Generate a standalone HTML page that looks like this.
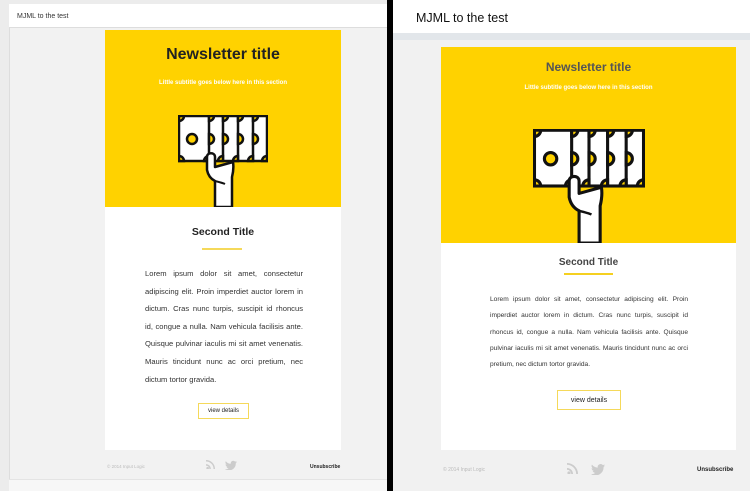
<!DOCTYPE html>
<html><head><style>
*{margin:0;padding:0;box-sizing:border-box}
body{width:750px;height:491px;overflow:hidden;background:#fff;font-family:"Liberation Sans",sans-serif;position:relative}
.a{position:absolute}
.txt{text-align:justify;color:#333}
.btn{display:flex;align-items:center;justify-content:center;color:#222}
</style></head><body>
<svg width="0" height="0" style="position:absolute"><defs>
<g id="ic">
<rect x="1" y="1" width="88" height="45" fill="#fff" stroke="#111" stroke-width="2.5"/>
<g stroke="#111" stroke-width="2.5" fill="#ffd200">
<line x1="31" y1="1" x2="31" y2="46"/><line x1="45" y1="1" x2="45" y2="46"/><line x1="60" y1="1" x2="60" y2="46"/><line x1="75" y1="1" x2="75" y2="46"/>
<circle cx="14" cy="24" r="5"/>
<path d="M31 19 a5 5 0 0 1 0 10z"/><path d="M45 19 a5 5 0 0 1 0 10z"/><path d="M60 19 a5 5 0 0 1 0 10z"/><path d="M75 19 a5 5 0 0 1 0 10z"/>
<path d="M1 6 a5 5 0 0 0 5 -5 h-5z"/><path d="M1 41 a5 5 0 0 1 5 5 h-5z"/>
<path d="M31 6 a5 5 0 0 0 5 -5 h-5z"/><path d="M45 6 a5 5 0 0 0 5 -5 h-5z"/><path d="M60 6 a5 5 0 0 0 5 -5 h-5z"/><path d="M75 6 a5 5 0 0 0 5 -5 h-5z"/>
<path d="M26 46 a5 5 0 0 1 5 -5 v5z"/><path d="M40 46 a5 5 0 0 1 5 -5 v5z"/><path d="M55 46 a5 5 0 0 1 5 -5 v5z"/><path d="M70 46 a5 5 0 0 1 5 -5 v5z"/><path d="M89 41 a5 5 0 0 0 -5 5 h5z"/>
</g>
<path d="M37 92 V66 C33 64 30 60 29 55 V42 C29 37 37 37 37 42 V52 L55 47 C56 53 55 58 54 62 V92 Z" fill="#fff" stroke="#111" stroke-width="2.5" stroke-linejoin="round"/>
<path d="M37 66 C41 67 45 68 47 69" fill="none" stroke="#111" stroke-width="2"/>
</g>
<g id="rss" fill="#ccc"><circle cx="2" cy="10" r="1.6"/><path d="M0 5 a6 6 0 0 1 6 6 h-1.8 a4.2 4.2 0 0 0 -4.2 -4.2z"/><path d="M0 0 a11 11 0 0 1 11 11 h-1.8 a9.2 9.2 0 0 0 -9.2 -9.2z"/></g>
<g id="tw"><path fill="#ccc" d="M12 2 c-.5.2-1 .3-1.4.4 .5-.3.9-.8 1.1-1.4-.5.3-1 .5-1.6.6A2.5 2.5 0 0 0 5.8 3.8 7 7 0 0 1 .8 1.2a2.5 2.5 0 0 0 .8 3.300c-.4 0-.8-.1-1.1-.3 0 1.2.9 2.2 2 2.4-.4.1-.8.1-1.1 0 .3 1 1.2 1.7 2.3 1.7A5 5 0 0 1 0 9.4 7 7 0 0 0 10.8 3.5V3.2c.5-.3.9-.8 1.2-1.2z"/></g>
</defs></svg>

<!-- LEFT -->
<div class="a" style="left:0;top:0;width:387px;height:491px;background:#ececec"></div>
<div class="a" style="left:9px;top:4px;width:378px;height:487px;background:#f2f2f2;border-left:1px solid #ddd"></div>
<div class="a" style="left:9px;top:4px;width:378px;height:24px;background:#fff;border-bottom:1px solid #ddd;font-size:7px;color:#333;padding:9px 8px">MJML to the test</div>
<div class="a" style="left:105px;top:30px;width:236px;height:177px;background:#ffd200"></div>
<div class="a" style="left:105px;top:46px;width:236px;text-align:center;font-weight:bold;font-size:16px;color:#222">Newsletter title</div>
<div class="a" style="left:105px;top:80px;width:236px;text-align:center;font-weight:bold;font-size:6px;color:#fff">Little subtitle goes below here in this section</div>
<svg class="a" style="left:178px;top:115px" width="90" height="92" viewBox="0 0 90 92"><use href="#ic"/></svg>
<div class="a" style="left:105px;top:207px;width:236px;height:243px;background:#fff"></div>
<div class="a" style="left:105px;top:226px;width:236px;text-align:center;font-weight:bold;font-size:10.5px;color:#222">Second Title</div>
<div class="a" style="left:202px;top:248px;width:40px;height:2px;background:#f5d95a"></div>
<div class="a txt" style="left:145px;top:265px;width:158px;font-size:7.6px;line-height:17.6px;text-align-last:left">Lorem ipsum dolor sit amet, consectetur adipiscing elit. Proin imperdiet auctor lorem in dictum. Cras nunc turpis, suscipit id rhoncus id, congue a nulla. Nam vehicula facilisis ante. Quisque pulvinar iaculis mi sit amet venenatis. Mauris tincidunt nunc ac orci pretium, nec dictum tortor gravida.</div>
<div class="a btn" style="left:198px;top:403px;width:51px;height:16px;border:1.5px solid #f5d95a;font-size:6px">view details</div>
<div class="a" style="left:107px;top:464px;font-size:4.5px;color:#bbb">© 2014 Input Logic</div>
<svg class="a" style="left:206px;top:460px" width="9" height="9" viewBox="0 0 11 11"><use href="#rss"/></svg>
<svg class="a" style="left:225px;top:460px" width="12" height="10" viewBox="0 0 12 10"><use href="#tw"/></svg>
<div class="a" style="left:310px;top:464px;font-size:5px;color:#222;font-weight:bold">Unsubscribe</div>
<div class="a" style="left:9px;top:479px;width:378px;height:12px;background:#f7f7f7;border-top:1px solid #e4e4e4"></div>

<!-- DIVIDER -->
<div class="a" style="left:387px;top:0;width:6px;height:491px;background:#000"></div>

<!-- RIGHT -->
<div class="a" style="left:393px;top:0;width:357px;height:491px;background:#f1f1f1"></div>
<div class="a" style="left:393px;top:0;width:357px;height:33px;background:#fff;font-size:12.5px;color:#111;padding:11px 23px">MJML to the test</div>
<div class="a" style="left:393px;top:33px;width:357px;height:7px;background:#e2e6ea"></div>
<div class="a" style="left:441px;top:47px;width:295px;height:196px;background:#ffd200"></div>
<div class="a" style="left:441px;top:60px;width:295px;text-align:center;font-weight:bold;font-size:12px;color:#555">Newsletter title</div>
<div class="a" style="left:441px;top:85px;width:295px;text-align:center;font-weight:bold;font-size:6px;color:#fff">Little subtitle goes below here in this section</div>
<svg class="a" style="left:533px;top:129px" width="112" height="114" viewBox="0 0 90 92"><use href="#ic"/></svg>
<div class="a" style="left:441px;top:243px;width:295px;height:207px;background:#fff"></div>
<div class="a" style="left:441px;top:257px;width:295px;text-align:center;font-weight:bold;font-size:10px;color:#444">Second Title</div>
<div class="a" style="left:564px;top:273px;width:49px;height:2px;background:#f5d020"></div>
<div class="a txt" style="left:490px;top:292px;width:198px;font-size:6.6px;line-height:16.3px;text-align-last:left">Lorem ipsum dolor sit amet, consectetur adipiscing elit. Proin imperdiet auctor lorem in dictum. Cras nunc turpis, suscipit id rhoncus id, congue a nulla. Nam vehicula facilisis ante. Quisque pulvinar iaculis mi sit amet venenatis. Mauris tincidunt nunc ac orci pretium, nec dictum tortor gravida.</div>
<div class="a btn" style="left:557px;top:390px;width:64px;height:20px;border:1.5px solid #f5d95a;font-size:7px">view details</div>
<div class="a" style="left:443px;top:467px;font-size:5px;color:#bbb">© 2014 Input Logic</div>
<svg class="a" style="left:567px;top:463px" width="11" height="11" viewBox="0 0 11 11"><use href="#rss"/></svg>
<svg class="a" style="left:591px;top:463px" width="14" height="12" viewBox="0 0 12 10"><use href="#tw"/></svg>
<div class="a" style="left:697px;top:467px;font-size:6px;color:#222;font-weight:bold">Unsubscribe</div>
</body></html>
